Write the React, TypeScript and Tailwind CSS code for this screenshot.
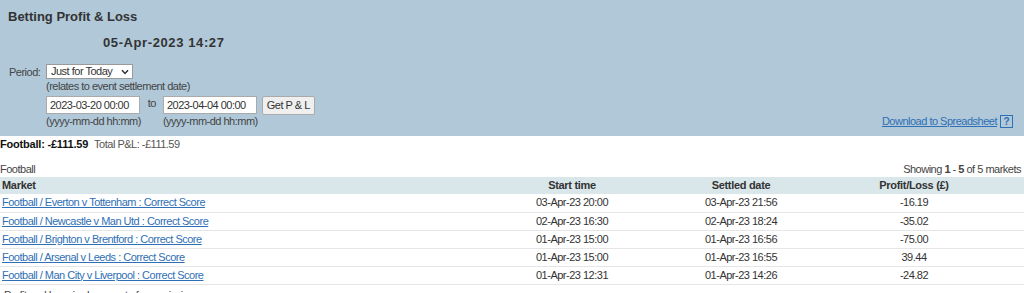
import React from "react";

const rows = [
  { market: "Football / Everton v Tottenham : Correct Score", start: "03-Apr-23 20:00", settled: "03-Apr-23 21:56", pl: "-16.19" },
  { market: "Football / Newcastle v Man Utd : Correct Score", start: "02-Apr-23 16:30", settled: "02-Apr-23 18:24", pl: "-35.02" },
  { market: "Football / Brighton v Brentford : Correct Score", start: "01-Apr-23 15:00", settled: "01-Apr-23 16:56", pl: "-75.00" },
  { market: "Football / Arsenal v Leeds : Correct Score", start: "01-Apr-23 15:00", settled: "01-Apr-23 16:55", pl: "39.44" },
  { market: "Football / Man City v Liverpool : Correct Score", start: "01-Apr-23 12:31", settled: "01-Apr-23 14:26", pl: "-24.82" },
];

const App: React.FC = () => {
  return (
    <div className="w-[1024px] h-[293px] overflow-hidden bg-white text-[11px] leading-[13px] tracking-[-0.5px] text-[#333] font-['Liberation_Sans',Arial,sans-serif]">
      {/* header panel */}
      <div className="h-[136px] bg-[#b0c8d8] px-[8px] pt-[9px] relative">
        <h1 className="text-[13px] font-bold leading-[15px] tracking-normal text-[#333]">Betting Profit &amp; Loss</h1>
        <div className="mt-[11px] pl-[95px] text-[13px] font-bold leading-[15px] tracking-[0.6px] text-[#333]">05-Apr-2023 14:27</div>
        <div className="mt-[14px] flex items-start">
          <span className="w-[38px] pl-[1px] pt-[2px] text-[#444]">Period:</span>
          <div className="flex flex-col">
            <div className="flex h-[15px] w-[87px] items-center justify-between border border-[#999] bg-white pl-[4px] pr-[3px] text-[#333]">
              <span>Just for Today</span>
              <svg width="8" height="6" viewBox="0 0 8 6">
                <path d="M1 1.2 L4 4.4 L7 1.2" stroke="#333" strokeWidth="1.5" fill="none" />
              </svg>
            </div>
            <span className="mt-[1px] text-[#444]">(relates to event settlement date)</span>
            <div className="mt-[3px] flex items-start">
              <div className="flex flex-col">
                <div className="flex h-[18px] w-[94px] items-center whitespace-nowrap border border-[#aaa] bg-white px-[3px] text-[#333]">2023-03-20 00:00</div>
                <span className="mt-[1px] text-[#444]">(yyyy-mm-dd hh:mm)</span>
              </div>
              <span className="w-[22px] pt-[1px] text-center text-[#444]">to</span>
              <div className="flex flex-col">
                <div className="flex h-[18px] w-[94px] items-center whitespace-nowrap border border-[#aaa] bg-white px-[3px] text-[#333]">2023-04-04 00:00</div>
                <span className="mt-[1px] text-[#444]">(yyyy-mm-dd hh:mm)</span>
              </div>
              <button className="ml-[4px] flex h-[19px] w-[53px] items-center justify-center whitespace-nowrap rounded-[2px] border border-[#aaa] bg-[#efefef] text-[#333]">Get P &amp; L</button>
            </div>
          </div>
        </div>
        <div className="absolute right-[11px] top-[115px] flex items-center gap-[3px]">
          <a className="text-[#2f6fb5] underline">Download to Spreadsheet</a>
          <span className="flex h-[13px] w-[13px] items-center justify-center border border-[#2f6fb5] text-[10px] font-bold tracking-normal text-[#2f6fb5]">?</span>
        </div>
      </div>

      {/* summary */}
      <div className="mt-[2px] flex items-baseline gap-[6px]">
        <span className="font-bold tracking-[-0.2px] text-[#111]">Football: -£111.59</span>
        <span className="text-[#555]">Total P&amp;L: -£111.59</span>
      </div>

      <div className="mt-[12px] flex items-end justify-between pr-[3px]">
        <span className="text-[#444]">Football</span>
        <span className="text-[#444]">
          Showing <b>1</b> - <b>5</b> of 5 markets
        </span>
      </div>

      <table className="mt-[1px] w-full border-collapse">
        <thead>
          <tr className="h-[17px] bg-[#d9e6ea] text-[#333]">
            <th className="pl-[2px] text-left font-bold tracking-[-0.3px]">Market</th>
            <th className="w-[212px] text-center font-bold tracking-[-0.3px]">Start time</th>
            <th className="w-[126px] text-center font-bold tracking-[-0.3px]">Settled date</th>
            <th className="w-[220px] text-center font-bold tracking-[-0.3px]">Profit/Loss (£)</th>
          </tr>
        </thead>
        <tbody>
          {rows.map((r) => (
            <tr key={r.market} className="h-[18px] border-b border-[#e6e6e6]">
              <td className="pl-[2px]">
                <a className="text-[#2f6fb5] underline">{r.market}</a>
              </td>
              <td className="text-center text-[#333]">{r.start}</td>
              <td className="text-center text-[#333]">{r.settled}</td>
              <td className="text-center text-[#333]">{r.pl}</td>
            </tr>
          ))}
        </tbody>
      </table>

      <div className="mt-[4px] pl-[4px] text-[#444]">Profit and Loss is shown net of commission</div>
    </div>
  );
};

export default App;
